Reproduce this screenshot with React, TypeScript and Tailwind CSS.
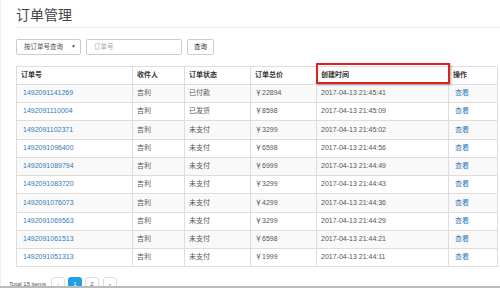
import React from 'react';

const ORDERS = [
  { id: '1492091141269', name: '吉利', status: '已付款', price: '22894', time: '2017-04-13 21:45:41' },
  { id: '1492091110004', name: '吉利', status: '已发货', price: '8598', time: '2017-04-13 21:45:09' },
  { id: '1492091102371', name: '吉利', status: '未支付', price: '3299', time: '2017-04-13 21:45:02' },
  { id: '1492091096400', name: '吉利', status: '未支付', price: '6598', time: '2017-04-13 21:44:56' },
  { id: '1492091089794', name: '吉利', status: '未支付', price: '6999', time: '2017-04-13 21:44:49' },
  { id: '1492091083720', name: '吉利', status: '未支付', price: '3299', time: '2017-04-13 21:44:43' },
  { id: '1492091076073', name: '吉利', status: '未支付', price: '4299', time: '2017-04-13 21:44:36' },
  { id: '1492091069563', name: '吉利', status: '未支付', price: '3299', time: '2017-04-13 21:44:29' },
  { id: '1492091061513', name: '吉利', status: '未支付', price: '6598', time: '2017-04-13 21:44:21' },
  { id: '1492091051313', name: '吉利', status: '未支付', price: '1999', time: '2017-04-13 21:44:11' },
];

const HEADERS = ['订单号', '收件人', '订单状态', '订单总价', '创建时间', '操作'];

const cell = 'h-[18.25px] flex items-center px-[4px] border-r border-b border-[#ddd] whitespace-nowrap';

const App: React.FC = () => {
  return (
    <div className="w-[500px] h-[288px] bg-white overflow-hidden font-['Liberation_Sans','Noto_Sans_CJK_SC',sans-serif] text-[#555]">
      <div className="h-[286px] overflow-hidden border-l border-[#eee]">
        {/* 标题 */}
        <div className="pl-[15px]">
          <h1 className="h-[28px] pt-[6px] text-[14px] leading-[18px] text-[#444] font-normal border-b border-[#eee]">订单管理</h1>
        </div>

        {/* 查询栏 */}
        <div className="pl-[15px] mt-[11px] flex items-center h-[16px] text-[6.5px]">
          <div className="w-[65px] h-[16px] border border-[#ccc] rounded-[2px] flex items-center justify-between pl-[7px] pr-[4px] text-[#555]">
            <span>按订单号查询</span>
            <span className="text-[5px]">▼</span>
          </div>
          <div className="ml-[5px] w-[96px] h-[16px] border border-[#ccc] rounded-[2px] flex items-center pl-[7px] text-[#aaa]">订单号</div>
          <div className="ml-[5px] w-[27px] h-[16px] border border-[#ccc] rounded-[2px] flex items-center justify-center text-[#333]">查询</div>
        </div>

        {/* 表格 */}
        <div className="ml-[15px] mt-[10.5px] relative w-[481px]">
          <div className="grid grid-cols-[116px_52px_66px_66px_132px_49px] border-l border-t border-[#ddd] text-[7px]">
            {HEADERS.map(h => (
              <div key={h} className={`${cell} font-bold text-[#333]`}>{h}</div>
            ))}
            {ORDERS.map((o, i) => {
              const bg = i % 2 === 0 ? 'bg-[#f9f9f9]' : 'bg-white';
              return (
                <React.Fragment key={o.id}>
                  <div className={`${cell} ${bg} pl-[6px] text-[#337ab7]`}>{o.id}</div>
                  <div className={`${cell} ${bg}`}>{o.name}</div>
                  <div className={`${cell} ${bg}`}>{o.status}</div>
                  <div className={`${cell} ${bg}`}>￥{o.price}</div>
                  <div className={`${cell} ${bg}`}>{o.time}</div>
                  <div className={`${cell} ${bg} pl-[6px] text-[#337ab7]`}>查看</div>
                </React.Fragment>
              );
            })}
          </div>
          {/* 红框标注 */}
          <div className="absolute left-[300px] top-[-3px] w-[134px] h-[21px] border-2 border-[#e0201c] shadow-[1px_1px_2px_rgba(0,0,0,0.35)]"></div>
        </div>

        {/* 分页 */}
        <div className="pl-[8px] mt-[10px] flex items-center gap-[3px] text-[6px]">
          <span className="text-[#555] mr-[2px]">Total 15 items</span>
          <div className="w-[14px] h-[14px] border border-[#ddd] rounded-[3px] flex items-center justify-center text-[#bbb]">‹</div>
          <div className="w-[14px] h-[14px] rounded-[3px] bg-[#20a0e4] flex items-center justify-center text-white">1</div>
          <div className="w-[14px] h-[14px] border border-[#ddd] rounded-[3px] flex items-center justify-center text-[#555]">2</div>
          <div className="ml-[1px] w-[14px] h-[14px] border border-[#ddd] rounded-[3px] flex items-center justify-center text-[#555]">›</div>
        </div>
      </div>
      <div className="h-[2px] bg-[#bbb]"></div>
    </div>
  );
};

export default App;
